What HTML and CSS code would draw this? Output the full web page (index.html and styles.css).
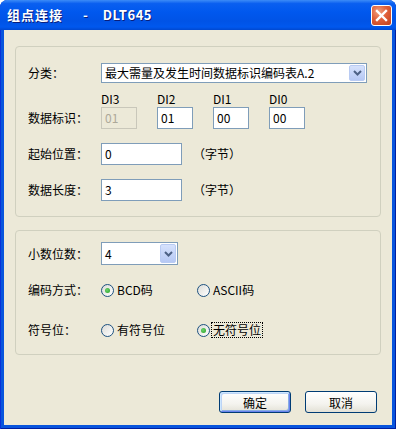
FILE: index.html
```html
<!DOCTYPE html>
<html lang="zh-CN">
  <head>
    <meta charset="UTF-8" />
    <title>组点连接 - DLT645</title>
    <link rel="stylesheet" href="styles.css">
  </head>
  <body>
    <div class="window">
      <div class="titlebar">
        <span class="title">组点连接<span class="dash">-</span><span class="code">DLT645</span></span>
        <button class="close" aria-label="关闭">
          <svg width="13" height="13" viewBox="0 0 13 13">
            <path d="M2 2 L11 11 M11 2 L2 11" stroke="#fff" stroke-width="2.4" stroke-linecap="square" />
          </svg>
        </button>
      </div>

      <div class="client">
        <div class="group group-top">
          <div class="row">
            <span class="label">分类：</span>
            <div class="combo combo-wide">
              <span class="combo-text">最大需量及发生时间数据标识编码表A.2</span>
              <span class="combo-btn">
                <svg width="9" height="6" viewBox="0 0 9 6"><path d="M1 1 L4.5 4.5 L8 1" fill="none" stroke="#4D6185" stroke-width="2" /></svg>
              </span>
            </div>
          </div>

          <div class="row row-di">
            <span class="label label-di">数据标识：</span>
            <div class="di-list">
              <div class="di">
                <span class="di-name">DI3</span>
                <div class="field field-di disabled">01</div>
              </div>
              <div class="di">
                <span class="di-name">DI2</span>
                <div class="field field-di">01</div>
              </div>
              <div class="di">
                <span class="di-name">DI1</span>
                <div class="field field-di">00</div>
              </div>
              <div class="di">
                <span class="di-name">DI0</span>
                <div class="field field-di">00</div>
              </div>
            </div>
          </div>

          <div class="row row-field">
            <span class="label">起始位置：</span>
            <div class="field field-num">0</div>
            <span class="unit">（字节）</span>
          </div>

          <div class="row row-field">
            <span class="label">数据长度：</span>
            <div class="field field-num">3</div>
            <span class="unit">（字节）</span>
          </div>
        </div>

        <div class="group group-bottom">
          <div class="row">
            <span class="label">小数位数：</span>
            <div class="combo combo-small">
              <span class="combo-text">4</span>
              <span class="combo-btn">
                <svg width="9" height="6" viewBox="0 0 9 6"><path d="M1 1 L4.5 4.5 L8 1" fill="none" stroke="#4D6185" stroke-width="2" /></svg>
              </span>
            </div>
          </div>

          <div class="row row-radio">
            <span class="label">编码方式：</span>
            <label class="option"><span class="radio checked"></span><span class="option-text">BCD码</span></label>
            <label class="option"><span class="radio"></span><span class="option-text">ASCII码</span></label>
          </div>

          <div class="row row-radio row-sign">
            <span class="label">符号位：</span>
            <label class="option"><span class="radio"></span><span class="option-text">有符号位</span></label>
            <label class="option"><span class="radio checked"></span><span class="option-text focused">无符号位</span></label>
          </div>
        </div>

        <div class="actions">
          <button class="btn btn-default">确定</button>
          <button class="btn">取消</button>
        </div>
      </div>
    </div>
  </body>
</html>
```

FILE: styles.css
```css
body {
  margin: 0;
  font-family: "Noto Sans CJK SC", "Noto Sans", sans-serif;
  font-size: 12px;
  color: #000;
  background-color: #fff;
}
.window {
  width: 396px;
  height: 429px;
  display: flex;
  flex-direction: column;
  background-color: #0855dd;
  border-radius: 8px 8px 0 0;
  box-shadow: inset 1px 0 0 #0831d9, inset -1px 0 0 #001ea0, inset 0 -1px 0 #001ea0;
  box-sizing: border-box;
}
.titlebar {
  height: 30px;
  flex: none;
  display: flex;
  align-items: center;
  justify-content: space-between;
  padding: 0 4px 0 7px;
  border-radius: 7px 7px 0 0;
  background: linear-gradient(
    #3c8cf7 0%,
    #0a5ff0 12%,
    #0058ee 40%,
    #0053e6 70%,
    #0058ee 90%,
    #0048d0 100%
  );
}
.title {
  color: #fff;
  font-size: 13px;
  font-weight: bold;
  letter-spacing: 1px;
  line-height: 16px;
  text-shadow: 1px 1px 0 #0a1e7a;
}
.dash {
  margin-left: 20px;
}
.code {
  margin-left: 14px;
  letter-spacing: 0.5px;
}
.close {
  width: 21px;
  height: 21px;
  margin-top: 1px;
  padding: 0;
  display: flex;
  align-items: center;
  justify-content: center;
  border: 1px solid #fff;
  border-radius: 3px;
  background: radial-gradient(circle at 35% 30%, #f0a080 0%, #e0603a 45%, #c2401c 100%);
}
.client {
  flex: 1;
  display: flex;
  flex-direction: column;
  margin: 0 4px 4px;
  padding: 16px 11px 12px;
  background-color: #ece9d8;
}
.group {
  border: 1px solid #d0d0bf;
  border-radius: 4px;
  padding: 16px 12px 16px;
  display: flex;
  flex-direction: column;
}
.group-top {
  height: 171px;
  box-sizing: border-box;
}
.group-bottom {
  margin-top: 13px;
  height: 125px;
  box-sizing: border-box;
  padding-top: 11px;
}
.row {
  display: flex;
  align-items: center;
}
.label {
  width: 73px;
  flex: none;
  line-height: 16px;
}
.combo {
  height: 20px;
  display: flex;
  align-items: center;
  justify-content: space-between;
  border: 1px solid #7f9db9;
  background-color: #fff;
  box-sizing: border-box;
  padding: 0 1px 0 3px;
}
.combo-wide {
  width: 266px;
}
.combo-small {
  width: 77px;
  height: 23px;
}
.combo-text {
  line-height: 16px;
  white-space: nowrap;
}
.combo-btn {
  width: 16px;
  height: 16px;
  display: flex;
  align-items: center;
  justify-content: center;
  border-radius: 2px;
  background: linear-gradient(#d6e2fc, #b6c8f4);
  border: 1px solid #b9cbf3;
  box-sizing: border-box;
}
.combo-small .combo-btn {
  height: 19px;
}
.row-di {
  margin-top: 10px;
  align-items: flex-end;
}
.label-di {
  line-height: 22px;
}
.di-list {
  display: flex;
  gap: 20px;
}
.di {
  display: flex;
  flex-direction: column;
  gap: 2px;
}
.di-name {
  line-height: 12px;
  font-size: 12px;
}
.field {
  height: 22px;
  border: 1px solid #7f9db9;
  background-color: #fff;
  box-sizing: border-box;
  padding-left: 3px;
  line-height: 19px;
}
.field-di {
  width: 36px;
}
.field.disabled {
  background-color: #ece9d8;
  border-color: #c9c7ba;
  color: #aca899;
}
.row-field {
  margin-top: 14px;
}
.field-num {
  width: 81px;
}
.unit {
  margin-left: 11px;
  line-height: 16px;
}
.row-radio {
  margin-top: 17px;
}
.row-sign {
  margin-top: 24px;
}
.option {
  width: 96px;
  display: flex;
  align-items: center;
}
.radio {
  width: 13px;
  height: 13px;
  flex: none;
  border: 1px solid #1c5180;
  border-radius: 50%;
  box-sizing: border-box;
  background: linear-gradient(135deg, #dcdcd7, #fff);
  display: flex;
  align-items: center;
  justify-content: center;
}
.radio.checked::after {
  content: "";
  width: 5px;
  height: 5px;
  border-radius: 50%;
  background: radial-gradient(circle at 40% 40%, #6ed16e, #21a121);
}
.option-text {
  margin-left: 2px;
  line-height: 14px;
  padding: 0 1px;
}
.option-text.focused {
  outline: 1px dotted #000;
}
.actions {
  margin-top: auto;
  display: flex;
  justify-content: flex-end;
  gap: 14px;
  padding-right: 4px;
}
.btn {
  width: 72px;
  height: 22px;
  padding: 0;
  font-family: "Noto Sans CJK SC", sans-serif;
  font-size: 12px;
  border: 1px solid #003c74;
  border-radius: 3px;
  background: linear-gradient(#fff 0%, #f4f3ee 60%, #e3e1d6 100%);
  color: #000;
}
.btn-default {
  box-shadow: inset 1px 1px 0 #cee7ff, inset -1px -1px 0 #6982ee, inset 2px 2px 0 #bcd4f6, inset -2px -2px 0 #89ade4;
}
```
